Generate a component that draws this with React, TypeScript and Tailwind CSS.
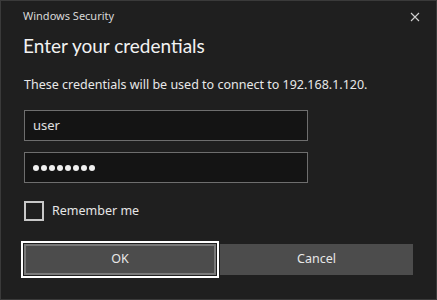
import React from "react";

export default function App() {
  return (
    <div
      className="w-[437px] h-[300px] bg-[#1f1f1f] border border-[#3a3a3a] text-[#e6e6e6] relative overflow-hidden"
      style={{ fontFamily: '"Noto Sans", "Open Sans", sans-serif' }}
    >
      <div className="h-[31px] flex items-center pl-[22px] text-[11px] text-[#d8d8d8]">
        Windows Security
      </div>
      <div className="absolute right-[16px] top-[11px] w-[10px] h-[10px]">
        <svg width="10" height="10" viewBox="0 0 10 10">
          <path d="M1 1 L9 9 M9 1 L1 9" stroke="#d0d0d0" strokeWidth="1.1" />
        </svg>
      </div>
      <div
        className="pl-[22px] text-[19px] leading-[28px] text-[#f2f2f2]"
        style={{ fontFamily: 'Lato, "Noto Sans", sans-serif' }}
      >
        Enter your credentials
      </div>
      <div className="pl-[23px] mt-[16px] text-[12.5px] leading-[18px] text-[#e8e8e8]">
        These credentials will be used to connect to 192.168.1.120.
      </div>
      <div className="pl-[23px] mt-[16px] flex flex-col gap-[11px]">
        <div className="w-[284px] h-[31px] bg-[#141414] border border-[#6e6e6e] flex items-center pl-[8px] text-[13px] text-[#e0e0e0]">
          user
        </div>
        <div className="w-[284px] h-[31px] bg-[#141414] border border-[#6e6e6e] flex items-center pl-[8px] gap-[2px]">
          {Array.from({ length: 8 }).map((_, i) => (
            <span key={i} className="w-[6px] h-[6px] rounded-full bg-[#f0f0f0]" />
          ))}
        </div>
      </div>
      <div className="pl-[23px] mt-[18px] flex items-center gap-[8px]">
        <div className="w-[20px] h-[20px] border-2 border-[#c8c8c8]" />
        <span className="text-[12.5px] text-[#e6e6e6]">Remember me</span>
      </div>
      <div className="pl-[20px] mt-[20px] flex items-center">
        <div className="p-[1px] border-2 border-white">
          <div className="w-[192px] h-[31px] bg-[#4c4c4c] border-2 border-[#7a7a7a] flex items-center justify-center text-[12.5px] text-[#e8e8e8]">
            OK
          </div>
        </div>
        <div className="ml-[1px] w-[193px] h-[31px] bg-[#4c4c4c] flex items-center justify-center text-[12.5px] text-[#e8e8e8]">
          Cancel
        </div>
      </div>
    </div>
  );
}
